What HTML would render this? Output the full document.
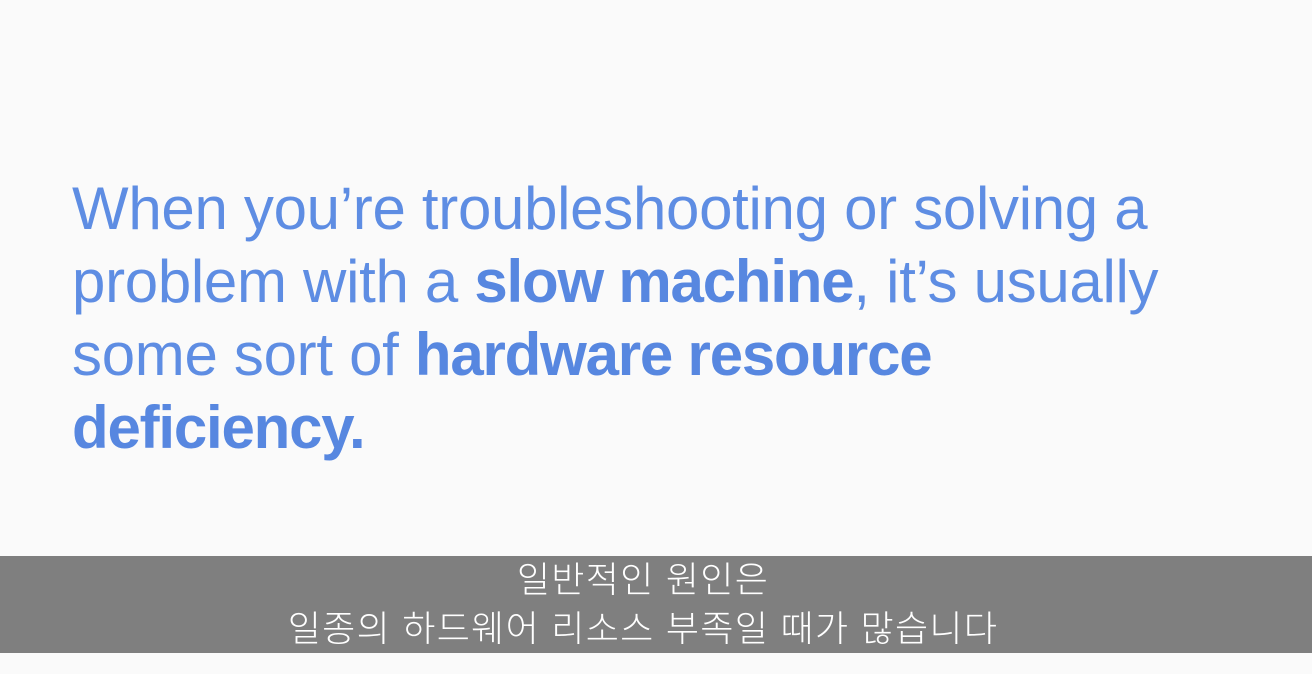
<!DOCTYPE html>
<html><head><meta charset="utf-8"><style>
html,body{margin:0;padding:0;}
body{width:1312px;height:674px;background:#fafafa;position:relative;overflow:hidden;}
.t{position:absolute;left:72px;top:172px;font-family:"Liberation Sans",sans-serif;font-size:60px;line-height:73px;color:#5e8de3;letter-spacing:-0.3px;white-space:nowrap;}
.t b{font-weight:bold;color:#5787e0;letter-spacing:-1.2px;}
.band{position:absolute;left:0;top:556px;width:1312px;height:97px;background:#7f7f7f;}
.s{position:absolute;left:-13px;width:1312px;text-align:center;color:#fff;font-family:"Liberation Sans","Noto Sans CJK KR",sans-serif;font-size:36px;line-height:44px;letter-spacing:1.3px;font-weight:300;}
</style></head><body>
<div class="t">When you’re troubleshooting or solving a<br>problem with a <b>slow machine</b>, it’s usually<br>some sort of <b>hardware resource</b><br><b>deficiency.</b></div>
<div class="band"></div>
<div class="s" style="top:558px">일반적인 원인은</div>
<div class="s" style="top:607px">일종의 하드웨어 리소스 부족일 때가 많습니다</div>
</body></html>
